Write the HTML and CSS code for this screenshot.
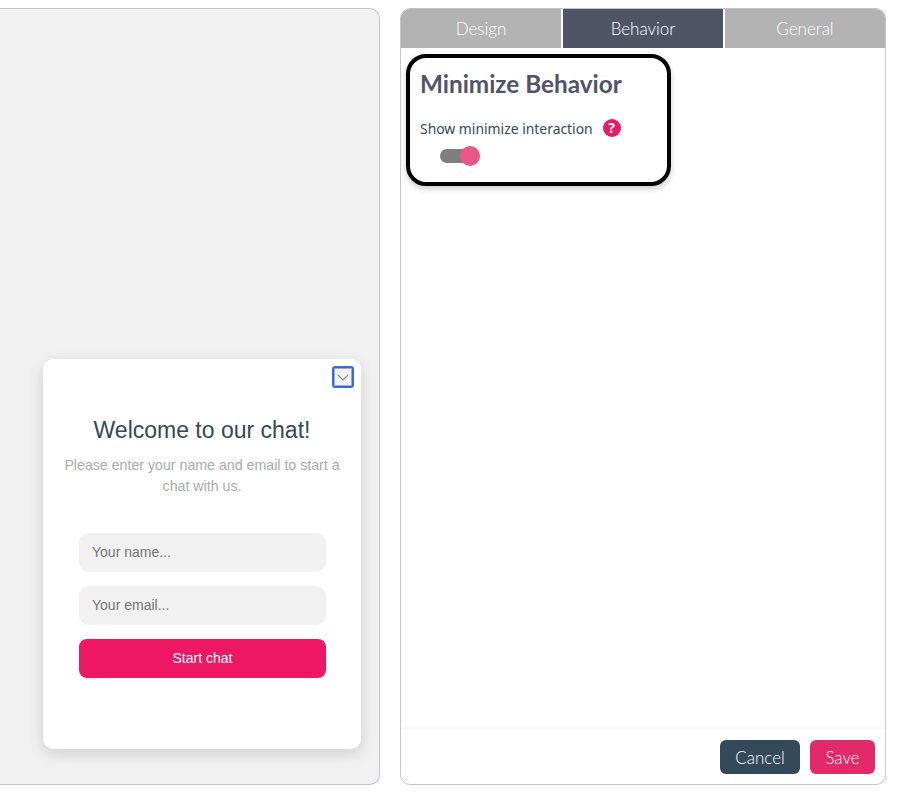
FILE: index.html
```html
<!DOCTYPE html>
<html lang="en">
<head>
  <meta charset="UTF-8" />
  <title>Chat widget settings</title>
  <link rel="stylesheet" href="styles.css">
</head>
<body>
  <div class="page">
    <div class="preview">
      <div class="chat-card">
        <div class="chat-top">
          <button class="minimize" type="button">
            <svg width="12" height="7" viewBox="0 0 12 7"><path d="M1 1l5 5 5-5" fill="none" stroke="#8a8a8a" stroke-width="1.1"/></svg>
          </button>
        </div>
        <h2>Welcome to our chat!</h2>
        <p>Please enter your name and email to start a chat with us.</p>
        <div class="chat-form">
          <div class="field">Your name...</div>
          <div class="field">Your email...</div>
          <button class="start" type="button">Start chat</button>
        </div>
      </div>
    </div>

    <div class="settings">
      <div class="tabs">
        <div class="tab">Design</div>
        <div class="tab active">Behavior</div>
        <div class="tab">General</div>
      </div>
      <div class="tab-body">
        <div class="highlight">
          <h3>Minimize Behavior</h3>
          <div class="option">
            <span>Show minimize interaction</span>
            <span class="help">?</span>
          </div>
          <div class="toggle"><span class="knob"></span></div>
        </div>
      </div>
      <div class="footer">
        <button class="btn cancel" type="button">Cancel</button>
        <button class="btn save" type="button">Save</button>
      </div>
    </div>
  </div>
</body>
</html>
```

FILE: styles.css
```css
body {
  margin: 0;
  background-color: white;
  font-family: "Lato", sans-serif;
}

.page {
  display: flex;
  gap: 20px;
  height: 796px;
  padding: 8px 18px 11px 0;
  box-sizing: border-box;
}

.preview {
  width: 380px;
  box-sizing: border-box;
  padding: 350px 18px 35px 43px;
  background-color: #f1f1f1;
  border: 1px solid #c4c4cc;
  border-left: none;
  border-radius: 0 10px 10px 0;
}

.chat-card {
  height: 390px;
  background-color: white;
  border-radius: 10px;
  box-shadow: 0 5px 15px rgba(0,0,0,0.14);
  font-family: "Liberation Sans", sans-serif;
  text-align: center;
}

.chat-top {
  display: flex;
  justify-content: flex-end;
  padding: 7px 7px 0 0;
}

.minimize {
  display: flex;
  align-items: center;
  justify-content: center;
  width: 22px;
  height: 22px;
  padding: 0;
  background-color: #f1f1f1;
  border: 2px solid #2f6fdc;
  border-radius: 3px;
  box-shadow: inset 0 0 0 1px #aaa;
}

.chat-card h2 {
  margin: 28px 0 0;
  font-size: 23px;
  font-weight: normal;
  line-height: 28px;
  color: #34495a;
}

.chat-card p {
  margin: 11px 18px 0;
  font-size: 14.2px;
  line-height: 21px;
  color: #aaaaaa;
}

.chat-form {
  display: flex;
  flex-direction: column;
  gap: 14px;
  margin: 36px 35px 0 36px;
}

.field {
  height: 39px;
  line-height: 38px;
  padding-left: 13px;
  background-color: #f1f1f1;
  border-radius: 10px;
  font-size: 14px;
  text-align: left;
  color: #757575;
}

.start {
  height: 39px;
  padding: 0 0 2px;
  background-color: #ee1763;
  border: none;
  border-radius: 8px;
  font-family: inherit;
  font-size: 14px;
  color: white;
}

.settings {
  display: flex;
  flex-direction: column;
  width: 486px;
  box-sizing: border-box;
  border: 1px solid #c4c4cc;
  border-radius: 10px;
  overflow: hidden;
}

.tabs {
  display: flex;
  gap: 2px;
}

.tab {
  flex: 1;
  height: 39px;
  line-height: 39px;
  background-color: #b3b3b3;
  text-align: center;
  font-size: 17px;
  font-weight: 300;
  color: white;
}

.tab.active {
  background-color: #505565;
}

.tab-body {
  flex: 1;
  padding: 6px 5px;
}

.highlight {
  width: 265px;
  height: 132px;
  box-sizing: border-box;
  padding: 11px 10px;
  border: 4px solid black;
  border-radius: 20px;
  box-shadow: 0 3px 6px rgba(0,0,0,0.2);
}

.highlight h3 {
  margin: 0;
  font-size: 24.3px;
  font-weight: bold;
  line-height: 30px;
  color: #50546a;
}

.option {
  display: flex;
  align-items: center;
  gap: 10px;
  margin-top: 20px;
  font-family: "Noto Sans", sans-serif;
  font-size: 13.9px;
  line-height: 20px;
  color: #34495a;
}

.help {
  width: 18px;
  height: 18px;
  margin-top: -2px;
  border-radius: 50%;
  background-color: #ee1763;
  color: white;
  font-size: 14px;
  font-weight: bold;
  line-height: 18px;
  text-align: center;
}

.toggle {
  position: relative;
  width: 30px;
  height: 14px;
  margin: 10px 0 0 20px;
  background-color: #7e7e7e;
  border-radius: 7px;
}

.knob {
  position: absolute;
  top: -3px;
  right: -10px;
  width: 20px;
  height: 20px;
  border-radius: 50%;
  background-color: #ec5584;
}

.footer {
  display: flex;
  justify-content: flex-end;
  gap: 10px;
  height: 55px;
  box-sizing: border-box;
  padding: 11px 10px 0 0;
  box-shadow: 0 -2px 4px rgba(0,0,0,0.04);
}

.btn {
  height: 34px;
  padding: 0;
  border: none;
  border-radius: 6px;
  font-family: "Lato", sans-serif;
  font-size: 17px;
  font-weight: 300;
  color: white;
}

.cancel {
  width: 80px;
  background-color: #34495a;
}

.save {
  width: 65px;
  background-color: #e22a6b;
}
```
